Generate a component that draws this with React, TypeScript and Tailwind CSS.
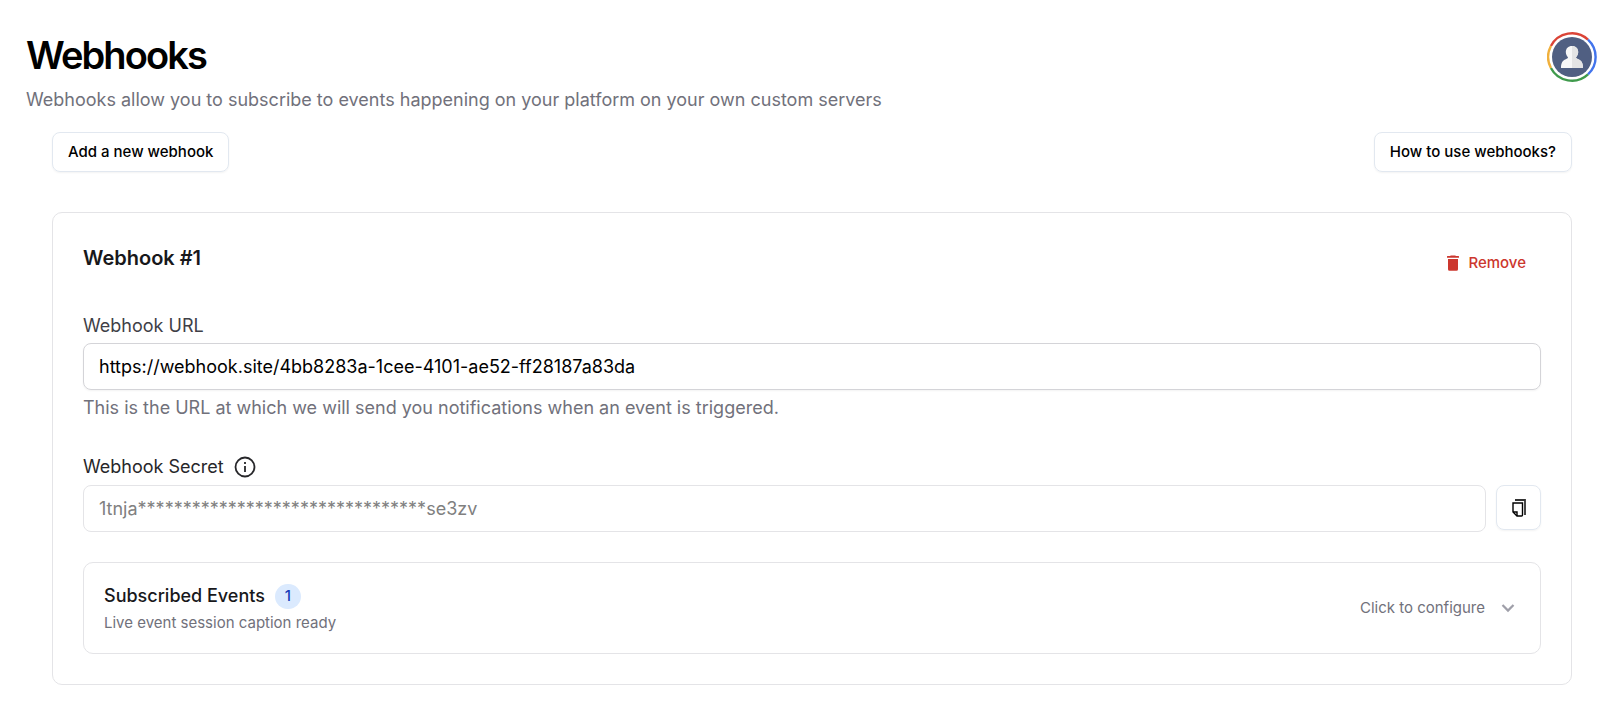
import { useState } from "react";

function AvatarIcon() {
  return (
    <svg viewBox="0 0 50 50" className="size-[50px]" aria-hidden="true">
      <g fill="none" strokeWidth="2.400">
        <path d="M3.900 14A23.700 23.700 0 0 1 41 7.600" stroke="#db4437" />
        <path d="M41 7.600A23.700 23.700 0 0 1 41 42.400" stroke="#4274ec" />
        <path d="M41 42.400A23.700 23.700 0 0 1 3.900 36" stroke="#3f9a4c" />
        <path d="M3.900 36A23.700 23.700 0 0 1 3.900 14" stroke="#f0b03c" />
      </g>
      <circle cx="25" cy="25" r="20" fill="#505f82" />
      <path
        d="M25 14c-3.800 0-6.200 2.600-6.200 6 0 2.300 1 4 2.200 5.200-.2 1-1 1.500-2.200 2-3.400 1.400-4.800 3.800-4.800 8.800h22c0-5-1.400-7.400-4.800-8.800-1.200-.5-2-1-2.200-2 1.200-1.200 2.200-2.900 2.200-5.200 0-3.400-2.400-6-6.200-6z"
        fill="#f7f7f7"
      />
      <path
        d="M25 14v22h11c0-5-1.400-7.400-4.800-8.800-1.200-.5-2-1-2.200-2 1.200-1.200 2.200-2.900 2.200-5.200 0-3.400-2.400-6-6.200-6z"
        fill="#e4e4e4"
      />
    </svg>
  );
}

function TrashIcon() {
  return (
    <svg viewBox="0 0 12 16" className="h-4 w-3" fill="currentColor" aria-hidden="true">
      <path d="M.5 1H3l.8-.6h4.400L9 1h2.500q.5 0 .5.500v1.300H0V1.500Q0 1 .5 1z" />
      <path d="M1 4h10v10.200a1.500 1.500 0 0 1-1.500 1.500h-7A1.500 1.500 0 0 1 1 14.200z" />
    </svg>
  );
}

function InfoIcon() {
  return (
    <svg viewBox="0 0 22 22" className="size-[22px]" fill="none" stroke="currentColor" aria-hidden="true">
      <circle cx="11" cy="11" r="9.500" strokeWidth="1.800" />
      <path d="M11 10v6M11 6v2" strokeWidth="1.800" />
    </svg>
  );
}

function CopyIcon() {
  return (
    <svg viewBox="0 0 14 18" className="h-[18px] w-3.5" fill="none" stroke="currentColor" aria-hidden="true">
      <path d="M3 1h10v15" strokeWidth="1.800" opacity="0.8" />
      <path d="M1 4h9.500v12q0 1-1 1H5l-4-4z" strokeWidth="1.400" />
      <path d="M1 13h4v4" strokeWidth="1.400" />
    </svg>
  );
}

function ChevronIcon() {
  return (
    <svg viewBox="0 0 14 10" className="h-2.5 w-3.5 text-zinc-400" fill="none" stroke="currentColor" strokeWidth="2.200" aria-hidden="true">
      <path d="M1.500 2L7 7.600 12.500 2" />
    </svg>
  );
}

export default function App() {
  const [url, setUrl] = useState("https://webhook.site/4bb8283a-1cee-4101-ae52-ff28187a83da");
  const secret = "1tnja" + "*".repeat(32) + "se3zv";

  return (
    <main className="bg-white font-['Inter',sans-serif] text-black">
      {/* Page header */}
      <header className="flex items-start justify-between pt-8 pr-[5px] pl-[26px]">
        <div>
          <h1 className="text-[38px] leading-[46px] font-semibold tracking-tighter">Webhooks</h1>
          <p className="mt-2 text-lg leading-7 text-zinc-500">
            Webhooks allow you to subscribe to events happening on your platform on your own custom servers
          </p>
        </div>
        <button aria-label="Account" className="rounded-full">
          <AvatarIcon />
        </button>
      </header>

      <div className="pt-[18px] pr-[30px] pl-[52px]">
        {/* Actions */}
        <div className="flex items-center justify-between">
          <button className="h-10 rounded-lg border border-slate-200 px-[15px] text-[15px] font-medium shadow-xs">
            Add a new webhook
          </button>
          <button className="h-10 rounded-lg border border-slate-200 px-[15px] text-[15px] font-medium shadow-xs">
            How to use webhooks?
          </button>
        </div>

        {/* Webhook card */}
        <section className="mt-10 rounded-[10px] border border-zinc-200 p-[30px]">
          <div className="flex items-start justify-between">
            <h2 className="text-xl leading-[30px] font-semibold text-zinc-900">Webhook #1</h2>
            <button className="flex h-10 items-center gap-[9px] px-[15px] text-[15px] font-medium text-[#cc372e]">
              <TrashIcon />
              Remove
            </button>
          </div>

          <div className="mt-[30px]">
            <label htmlFor="webhook-url" className="block text-lg leading-[26px] text-zinc-700">
              Webhook URL
            </label>
            <input
              id="webhook-url"
              type="text"
              value={url}
              onChange={(e) => setUrl(e.target.value)}
              className="mt-1 block h-[47px] w-full rounded-lg border border-zinc-300 px-[15px] text-lg shadow-xs"
            />
            <p className="mt-1 text-lg leading-7 text-zinc-500">
              This is the URL at which we will send you notifications when an event is triggered.
            </p>
          </div>

          <div className="mt-8">
            <div className="flex h-[26px] items-center gap-[10px] text-zinc-800">
              <label htmlFor="webhook-secret" className="text-lg leading-[26px]">
                Webhook Secret
              </label>
              <InfoIcon />
            </div>
            <div className="mt-[5px] flex items-start gap-[10px]">
              <input
                id="webhook-secret"
                type="text"
                value={secret}
                disabled
                className="h-[47px] min-w-0 flex-1 rounded-lg border border-zinc-200 px-[15px] text-lg text-[#808080]"
              />
              <button
                aria-label="Copy"
                className="flex size-[45px] items-center justify-center rounded-lg border border-slate-200 shadow-xs"
              >
                <CopyIcon />
              </button>
            </div>
          </div>

          {/* Subscribed events */}
          <button className="mt-[30px] flex w-full items-center justify-between rounded-[10px] border border-zinc-200 p-5 text-left">
            <span>
              <span className="flex items-center gap-[10px]">
                <span className="text-lg leading-[26px] font-medium text-zinc-900">Subscribed Events</span>
                <span className="flex h-[25px] w-[26px] items-center justify-center rounded-full bg-blue-100 text-[15px] font-medium text-blue-800">
                  1
                </span>
              </span>
              <span className="mt-1 block text-[15px] leading-5 text-zinc-500">Live event session caption ready</span>
            </span>
            <span className="flex items-center gap-4 pr-[5px] text-[15px] text-zinc-500">
              Click to configure
              <ChevronIcon />
            </span>
          </button>
        </section>
      </div>
    </main>
  );
}
